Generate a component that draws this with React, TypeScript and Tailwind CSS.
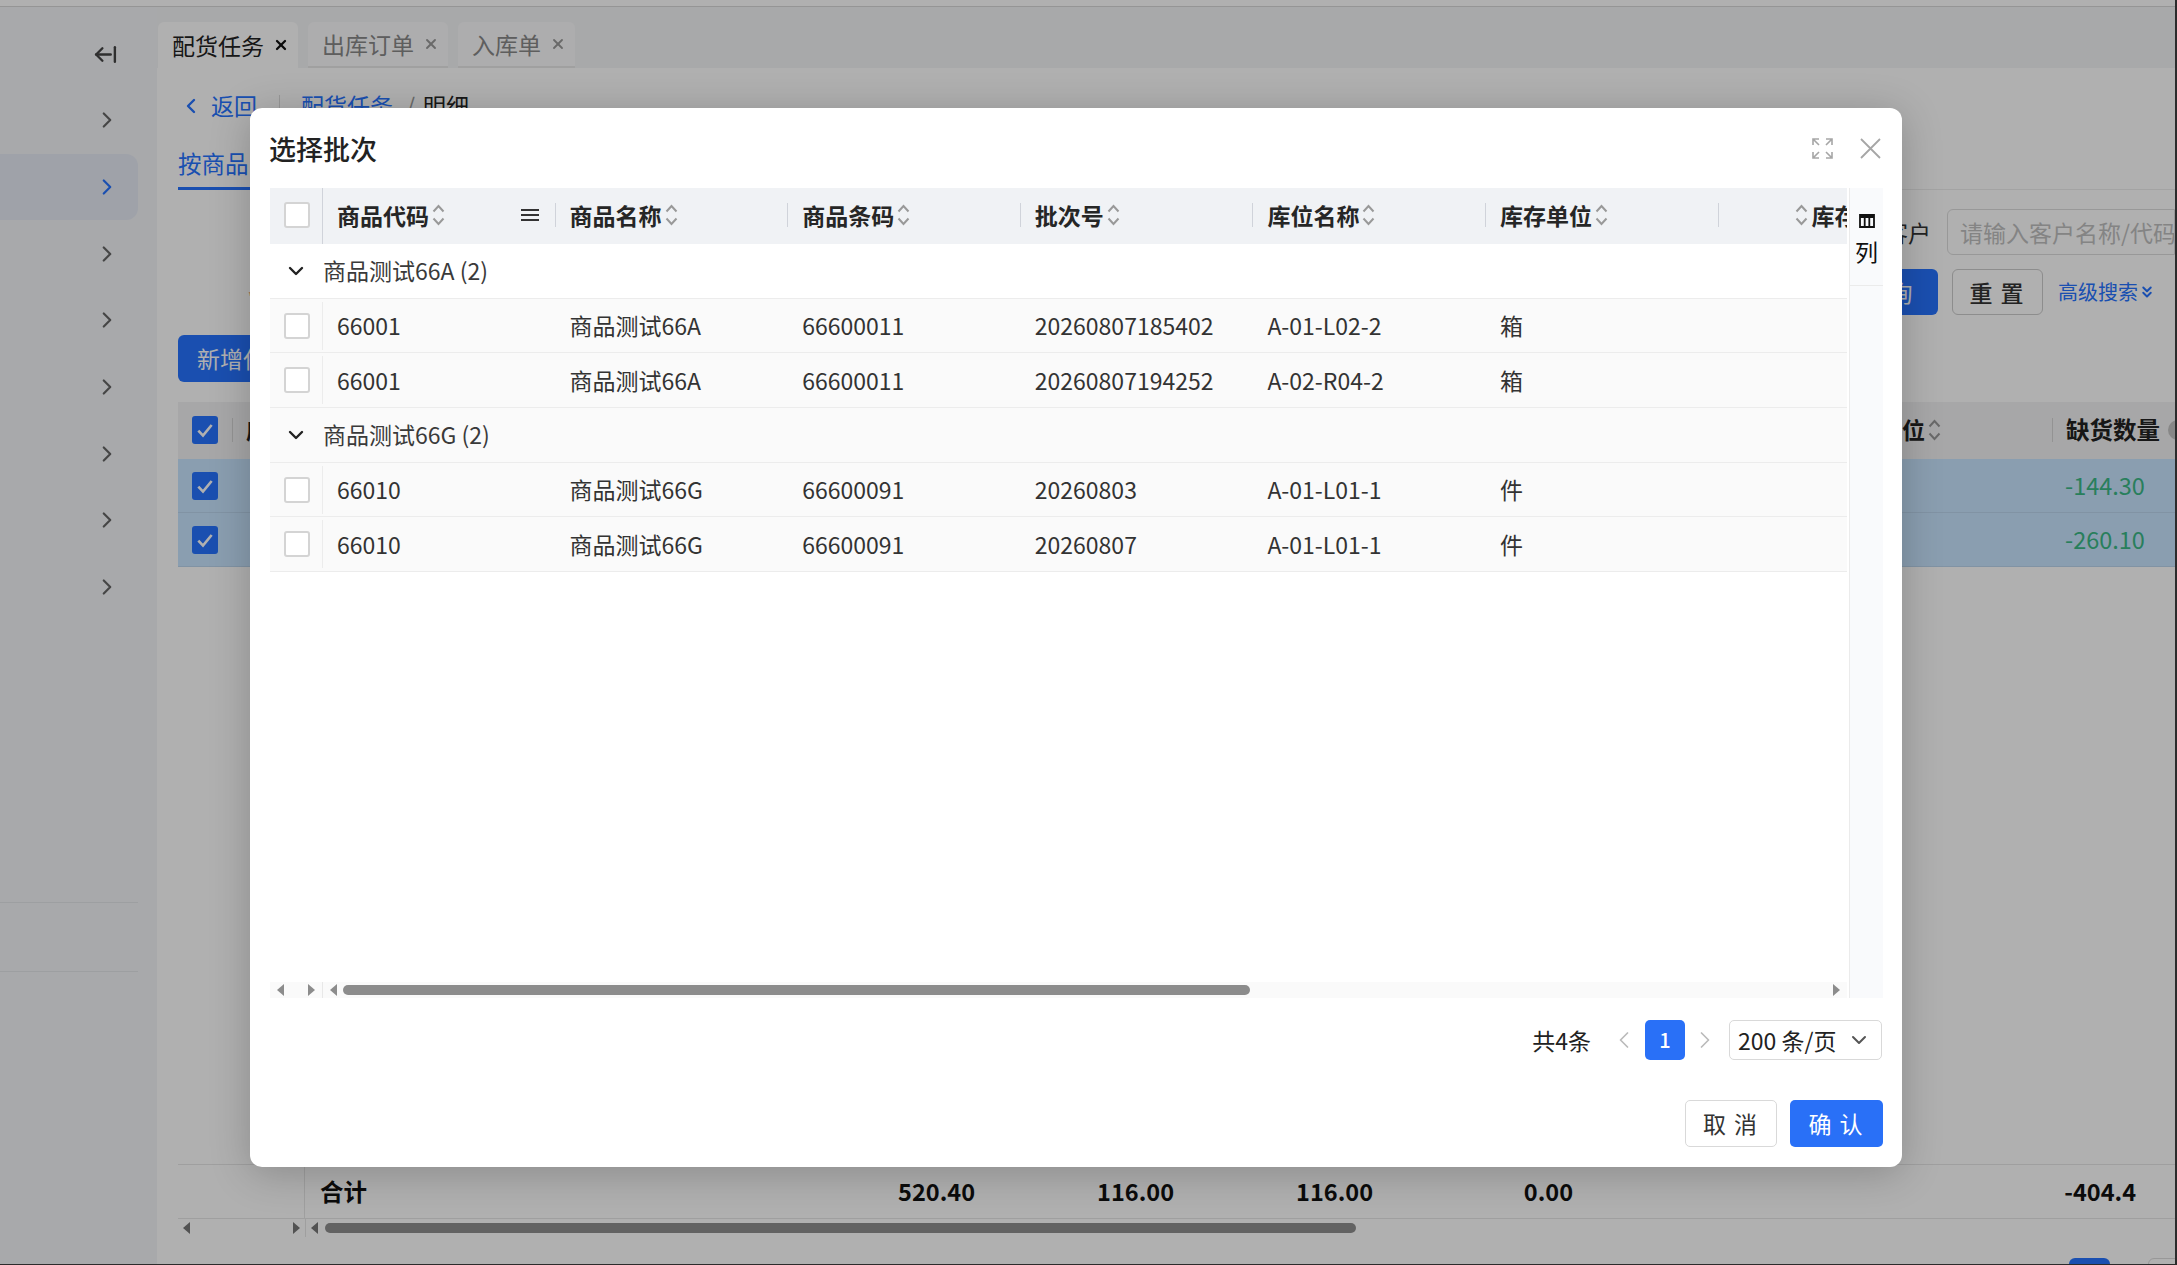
import React from "react";
import { ArrowLeftFromLine, ChevronDown, ChevronLeft, ChevronRight, ChevronsDown, X } from "lucide-react";

const columns = ["商品代码", "商品名称", "商品条码", "批次号", "库位名称", "库存单位"];

const groups = [
  {
    name: "商品测试66A (2)",
    bg: "bg-white",
    rows: [
      ["66001", "商品测试66A", "66600011", "20260807185402", "A-01-L02-2", "箱"],
      ["66001", "商品测试66A", "66600011", "20260807194252", "A-02-R04-2", "箱"],
    ],
  },
  {
    name: "商品测试66G (2)",
    bg: "bg-[#fafafa]",
    rows: [
      ["66010", "商品测试66G", "66600091", "20260803", "A-01-L01-1", "件"],
      ["66010", "商品测试66G", "66600091", "20260807", "A-01-L01-1", "件"],
    ],
  },
];

const SortIcon = ({ className = "" }: { className?: string }) => (
  <svg width="13" height="26" viewBox="0 0 13 26" fill="none" stroke="#999" strokeWidth="2" className={className}>
    <path d="M1.5 9.5 6.5 4l5 5.5" />
    <path d="M1.5 16.5 6.5 22l5-5.5" />
  </svg>
);

const Tri = ({ left, color = "#8c8c8c" }: { left?: boolean; color?: string }) => (
  <svg width="7" height="12" viewBox="0 0 7 12" fill={color} className="shrink-0">
    <path d={left ? "M7 0v12L0 6z" : "M0 0v12l7-6z"} />
  </svg>
);

const Checkbox = () => <div className="h-[26px] w-[26px] rounded-[3px] border-2 border-[#d4d4d4] bg-white" />;

const CheckedBox = () => (
  <div className="flex h-[28px] w-[26px] items-center justify-center rounded-[3px] bg-[#2673ff]">
    <svg width="20" height="20" viewBox="0 0 18 18" fill="none" stroke="#fff" strokeWidth="2.4">
      <path d="M3 9.5 7.2 14 15 4.5" />
    </svg>
  </div>
);

const Sidebar = () => (
  <aside className="flex h-full w-[157px] shrink-0 flex-col bg-[#f3f5f8]">
    <div className="flex h-[80px] w-[138px] items-center justify-end pt-[15px] pr-[20px] text-[#444]">
      <ArrowLeftFromLine size={25} strokeWidth={2.3} />
    </div>
    {[0, 1, 2, 3, 4, 5, 6, 7].map((i) => (
      <div
        key={i}
        className={
          i === 1
            ? "flex h-[66.7px] w-[138px] items-center justify-end rounded-r-[12px] bg-[#e6ebf5] pr-[18px] text-[#2673ff]"
            : "flex h-[66.7px] w-[138px] items-center justify-end pr-[18px] text-[#666]"
        }
      >
        <ChevronRight size={26} strokeWidth={2} />
      </div>
    ))}
    <div className="mt-[281px] h-[70px] w-[138px] border-y border-[#e4e6ea]" />
  </aside>
);

const Tab = ({ label, active }: { label: string; active?: boolean }) => (
  <div
    className={
      active
        ? "flex h-[46px] items-center gap-[9px] rounded-t-[6px] bg-white pr-[9px] pl-[14px] text-[#222]"
        : "flex h-[46px] items-center gap-[9px] rounded-t-[6px] border-b-2 border-[#e8e8e8] bg-[#fbfbfc] pr-[9px] pl-[14px] text-[#888]"
    }
  >
    <span className="text-[23px] leading-none">{label}</span>
    <X size={16} strokeWidth={active ? 3.4 : 2.8} className={active ? "text-[#111]" : "text-[#999]"} />
  </div>
);

const BackgroundPage = () => (
  <div className="flex h-full flex-col overflow-hidden bg-white">
    <div className="h-[7px] shrink-0 border-b border-[#d8d8d8]" />
    <div className="flex min-h-0 flex-1">
      <Sidebar />
      <main className="flex min-w-0 flex-1 flex-col">
        <div className="flex h-[61px] shrink-0 items-end gap-[10px] bg-[#f4f5f7] pl-px">
          <Tab label="配货任务" active />
          <Tab label="出库订单" />
          <Tab label="入库单" />
        </div>

        <div className="flex min-h-0 flex-1 flex-col pl-[21px]">
          {/* Breadcrumb */}
          <div className="flex h-[71px] shrink-0 items-center pt-[4px] text-[23px] text-[#2673ff]">
            <ChevronLeft size={24} strokeWidth={2.4} className="ml-[1px]" />
            <span className="ml-[8px]">返回</span>
            <span className="ml-[22px] h-[22px] w-px bg-[#ddd]" />
            <span className="ml-[21px]">配货任务</span>
            <span className="ml-[13px] text-[#999]">/</span>
            <span className="ml-[8px] text-[#222]">明细</span>
          </div>

          {/* Page tabs */}
          <div className="h-[51px] shrink-0 border-b border-[#ececec]">
            <div className="flex h-[51px] w-[72px] items-center border-b-[3px] border-[#2673ff] pt-[1px] text-[23.5px] whitespace-nowrap text-[#2673ff]">
              按商品
            </div>
          </div>

          {/* Filters */}
          <div className="flex h-[145px] shrink-0">
            <span className="ml-[70px] pt-[99px] text-[14px] leading-none text-[#e8742a]">*</span>
            <div className="ml-auto flex w-[477px] flex-col">
              <div className="mt-[19px] flex h-[46px] items-center">
                <span className="ml-[187px] text-[23px] whitespace-nowrap text-[#333]">客户</span>
                <div className="ml-[16px] flex h-[46px] flex-1 items-center overflow-hidden rounded-l-[6px] border border-[#ddd] pl-[12px] text-[23px] whitespace-nowrap text-[#bfbfbf]">
                  请输入客户名称/代码
                </div>
              </div>
              <div className="mt-[14px] flex h-[46px] items-center">
                <div className="ml-[143px] flex h-[46px] w-[97px] items-center justify-center rounded-[6px] bg-[#2673ff] text-[23px] tracking-[8px] text-white">
                  查询
                </div>
                <div className="ml-[14px] flex h-[46px] w-[91px] items-center justify-center rounded-[6px] border border-[#ccc] bg-white pl-[6px] text-[23px] font-medium tracking-[8px] text-[#333]">
                  重置
                </div>
                <span className="ml-[15px] text-[20px] whitespace-nowrap text-[#2673ff]">高级搜索</span>
                <ChevronsDown size={18} strokeWidth={2.6} className="shrink-0 text-[#2673ff]" />
              </div>
            </div>
          </div>

          <div className="flex h-[47px] w-[150px] shrink-0 items-center rounded-[6px] bg-[#2673ff] pl-[19px] text-[23px] text-white">
            新增任务
          </div>

          {/* Table behind the modal */}
          <div className="mt-[20px] flex h-[57px] shrink-0 items-center bg-[#f2f2f3] pb-[2px]">
            <span className="ml-[14px]">
              <CheckedBox />
            </span>
            <span className="ml-[14px] h-[24px] w-px bg-[#d6d6d6]" />
            <span className="ml-[13px] text-[23px] font-bold text-[#222]">序号</span>
            <div className="ml-auto flex w-[296px] shrink-0 items-center overflow-hidden whitespace-nowrap">
              <span className="shrink-0 text-[23px] font-bold text-[#222]">单位</span>
              <SortIcon className="ml-[3px] shrink-0" />
              <span className="ml-[111px] h-[24px] w-px shrink-0 bg-[#d6d6d6]" />
              <span className="ml-[13px] shrink-0 text-[23.5px] font-bold text-[#222]">缺货数量</span>
              <span className="ml-[8px] h-[20px] w-[20px] shrink-0 rounded-full bg-[#c4c4c4]" />
            </div>
          </div>
          {["-144.30", "-260.10"].map((v) => (
            <div key={v} className="flex h-[54px] shrink-0 items-center border-b border-[#bcd6ee] bg-[#c9e5ff]">
              <span className="ml-[14px]">
                <CheckedBox />
              </span>
              <span className="ml-auto w-[110px] text-[23.5px] text-[#3ab886]">{v}</span>
            </div>
          ))}

          {/* Totals */}
          <div className="mt-[597px] flex h-[55px] shrink-0 items-center border-y border-[#e6e6e6] text-[23.5px] font-bold text-[#111]">
            <div className="flex h-full w-[127px] shrink-0 border-r border-[#e6e6e6]" />
            <span className="ml-[15px] w-[455px] shrink-0">合计</span>
            <span className="w-[200px] shrink-0 text-right">520.40</span>
            <span className="w-[199px] shrink-0 text-right">116.00</span>
            <span className="w-[199px] shrink-0 text-right">116.00</span>
            <span className="w-[200px] shrink-0 text-right">0.00</span>
            <span className="w-[563px] shrink-0 text-right">-404.4</span>
          </div>
          <div className="flex h-[18px] shrink-0 items-center">
            <div className="flex h-full w-[128px] shrink-0 items-center justify-between border-r border-[#e6e6e6] px-[5px]">
              <Tri left color="#777" />
              <Tri color="#777" />
            </div>
            <span className="ml-[5px]">
              <Tri left color="#777" />
            </span>
            <div className="ml-[7px] h-[10px] w-[1031px] rounded-[5px] bg-[#8f8f8f]" />
          </div>

          {/* Pager peeking at the bottom */}
          <div className="mt-[21px] flex shrink-0 pl-[1891px]">
            <div className="h-[40px] w-[41px] shrink-0 rounded-[6px] bg-[#2673ff]" />
            <div className="ml-[38px] h-[40px] w-[60px] shrink-0 rounded-[6px] border border-[#ddd]" />
          </div>
        </div>
      </main>
    </div>
  </div>
);

const Modal = () => (
  <div className="absolute top-[108px] left-[250px] flex h-[1059px] w-[1652px] flex-col rounded-[12px] bg-white pr-[19px] pl-[20px] shadow-[0_6px_40px_rgba(0,0,0,0.22)]">
    {/* Title */}
    <div className="flex h-[80px] shrink-0 items-center justify-between">
      <h2 className="-ml-px text-[27px] leading-none font-medium text-[#222]">选择批次</h2>
      <div className="flex items-center gap-[27px] pr-[2px]">
        <svg width="21" height="21" viewBox="0 0 21 21" fill="none" stroke="#a6a6a6" strokeWidth="1.6">
          <path d="M1 7V1h6M1 1l6 6M14 1h6v6M20 1l-6 6M1 14v6h6M1 20l6-6M14 20h6v-6M20 20l-6-6" />
        </svg>
        <svg width="21" height="21" viewBox="0 0 21 21" fill="none" stroke="#a6a6a6" strokeWidth="1.8">
          <path d="m1 1 19 19M20 1 1 20" />
        </svg>
      </div>
    </div>

    {/* Table */}
    <div className="flex h-[810px] shrink-0">
      <div className="flex w-[1580px] shrink-0 flex-col border-r border-[#ebebeb]">
        <div className="flex h-[56px] w-[1577px] shrink-0 items-center overflow-hidden bg-[#f0f2f5] pb-[2px] text-[23px] font-bold text-[#262626]">
          <div className="-mb-[2px] flex h-[56px] w-[53px] shrink-0 items-center border-r border-[#d0d3da] pb-[2px] pl-[14px]">
            <Checkbox />
          </div>
          {columns.map((c, i) => (
            <div key={c} className="flex w-[232.6px] shrink-0 items-center pl-[14px]">
              <span>{c}</span>
              <SortIcon className="ml-[3px]" />
              {i === 0 && (
                <svg width="18" height="14" viewBox="0 0 18 14" stroke="#333" strokeWidth="2" className="ml-auto">
                  <path d="M0 2h18M0 7h18M0 12h18" />
                </svg>
              )}
              <span className={i === 0 ? "ml-[16px] h-[24px] w-px bg-[#d0d3da]" : "ml-auto h-[24px] w-px bg-[#d0d3da]"} />
            </div>
          ))}
          <div className="flex min-w-0 flex-1 items-center pl-[76px] whitespace-nowrap">
            <SortIcon className="shrink-0" />
            <span className="ml-[4px]">库存数量</span>
          </div>
        </div>

        {groups.map((g) => (
          <React.Fragment key={g.name}>
            <div className={`flex h-[54.7px] w-[1577px] shrink-0 items-center border-b border-[#ececec] ${g.bg}`}>
              <ChevronDown size={24} strokeWidth={2.4} className="ml-[14px] text-[#222]" />
              <span className="ml-[15px] text-[23px] leading-none text-[#3a3a3a]">{g.name}</span>
            </div>
            {g.rows.map((r) => (
              <div key={r[3]} className="flex h-[54.7px] w-[1577px] shrink-0 items-center border-b border-[#ececec] bg-[#fafafa] text-[23px] text-[#333]">
                <div className="flex h-[48px] w-[53px] shrink-0 items-center border-r border-[#ececec] pl-[14px]">
                  <Checkbox />
                </div>
                {r.map((cell, i) => (
                  <div key={i} className="w-[232.6px] shrink-0 pl-[14px] whitespace-nowrap">
                    {cell}
                  </div>
                ))}
              </div>
            ))}
          </React.Fragment>
        ))}

        {/* Scrollbar */}
        <div className="mt-auto flex h-[16px] w-[1577px] shrink-0 items-center bg-[#fafafa]">
          <div className="flex h-full w-[53px] shrink-0 items-center justify-between border-r border-[#e8e8e8] pr-[7px] pl-[7px]">
            <Tri left />
            <Tri />
          </div>
          <span className="ml-[7px]">
            <Tri left />
          </span>
          <div className="ml-[6px] h-[10px] w-[907px] rounded-[5px] bg-[#8c8c8c]" />
          <span className="mr-[7px] ml-auto">
            <Tri />
          </span>
        </div>
      </div>

      {/* Column settings strip */}
      <div className="flex-1 bg-[#f9fafc]">
        <div className="flex h-[98px] flex-col items-center border-b border-[#ebebeb] pt-[26px] text-[#111]">
          <svg width="16" height="14" viewBox="0 0 16 14" fill="none" stroke="#111" strokeWidth="1.8">
            <path d="M1 1h14v12H1zM5.7 1v12M10.3 1v12M1 3h14" />
          </svg>
          <span className="mt-[8px] text-[23px] leading-[30px]">列</span>
        </div>
      </div>
    </div>

    {/* Pagination */}
    <div className="mt-[22px] mr-px flex h-[40px] shrink-0 items-center justify-end text-[#222]">
      <span className="text-[23px]">共4条</span>
      <ChevronLeft size={28} strokeWidth={1.5} className="ml-[19px] text-[#bbb]" />
      <div className="ml-[7px] flex h-[40px] w-[40px] items-center justify-center rounded-[5px] bg-[#2970f7] text-[20px] font-medium text-white">1</div>
      <ChevronRight size={28} strokeWidth={1.5} className="ml-[6px] text-[#bbb]" />
      <div className="ml-[10px] flex h-[40px] w-[153px] items-center rounded-[5px] border border-[#d9d9d9] pl-[8px] text-[23px] whitespace-nowrap">
        200 条/页
        <ChevronDown size={24} strokeWidth={2} className="mr-[10px] ml-auto text-[#555]" />
      </div>
    </div>

    {/* Footer */}
    <div className="mt-[40px] flex h-[47px] shrink-0 items-center justify-end gap-[13px]">
      <button className="flex h-[47px] w-[92px] items-center justify-center rounded-[5px] border border-[#d9d9d9] bg-white pl-[6px] text-[23px] tracking-[8px] text-[#333]">
        取消
      </button>
      <button className="flex h-[47px] w-[93px] items-center justify-center rounded-[5px] bg-[#2970f7] pl-[6px] text-[23px] tracking-[8px] text-white">
        确认
      </button>
    </div>
  </div>
);

export default function App() {
  return (
    <div className="relative h-[1265px] w-[2177px] overflow-hidden border-r-2 border-b border-[#2b2b2b] [font-family:'Noto_Sans_CJK_SC','Noto_Sans',sans-serif]">
      <BackgroundPage />
      <div className="absolute inset-0 bg-black/[0.31]" />
      <Modal />
    </div>
  );
}
